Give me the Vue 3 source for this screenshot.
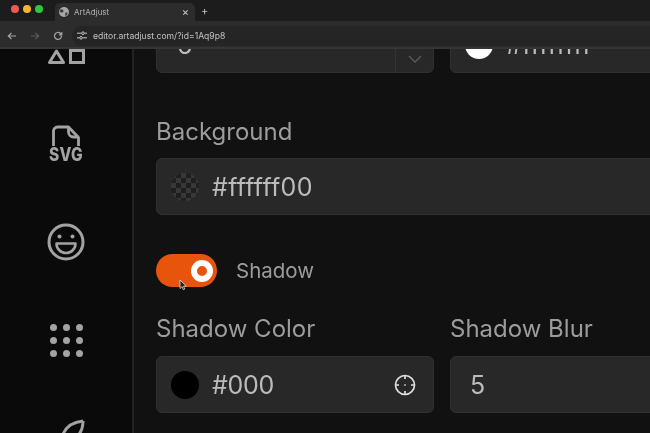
<script setup>
const dots = Array.from({ length: 9 })
</script>

<template>
  <div class="app">
    <div class="tabbar">
      <div class="lights">
        <span class="light red"></span>
        <span class="light yellow"></span>
        <span class="light green"></span>
      </div>
      <div class="tab">
        <svg class="globe" width="10" height="10" viewBox="0 0 12 12">
          <circle cx="6" cy="6" r="6" fill="#a8a8a8" />
          <path d="M2 2.500l3 1 .5 2-2 1.500L1 6zM7.500 7l3-.5-1 3-2 1.500z" fill="#3a3a3a" />
        </svg>
        <span class="tab-title">ArtAdjust</span>
        <span class="tab-close">×</span>
      </div>
      <span class="new-tab">+</span>
    </div>

    <div class="toolbar">
      <svg class="nav" width="10" height="10" viewBox="0 0 10 10" fill="none" stroke="#a5a5a5" stroke-width="1.200">
        <path d="M9 5H1.500M4.500 1.800L1.300 5l3.200 3.200" />
      </svg>
      <svg class="nav" width="10" height="10" viewBox="0 0 10 10" fill="none" stroke="#5c5c5c" stroke-width="1.200">
        <path d="M1 5h7.500M5.500 1.800L8.700 5 5.500 8.200" />
      </svg>
      <svg class="nav" width="10" height="10" viewBox="0 0 10 10" fill="none" stroke="#a5a5a5" stroke-width="1.200">
        <path d="M8.500 5a3.500 3.500 0 1 1-1-2.500L8.600 3.600M8.800 1v2.800H6" />
      </svg>
      <div class="url-pill">
        <svg width="10" height="9" viewBox="0 0 10 9" fill="none" stroke="#c4c4c4" stroke-width="1">
          <path d="M0 2.200h4.500M7.500 2.200H10M0 6.800h2.500M5.500 6.800H10" />
          <circle cx="6" cy="2.200" r="1.300" />
          <circle cx="4" cy="6.800" r="1.300" />
        </svg>
        <span class="url">editor.artadjust.com/?id=1Aq9p8</span>
      </div>
    </div>

    <div class="body">
      <aside class="sidebar">
        <svg class="ico-shapes" width="38" height="18" viewBox="0 0 38 18" fill="none" stroke="#a3a3a3" stroke-width="3">
          <path d="M9.500 4L2.500 15.500h14z" stroke-linejoin="round" />
          <rect x="23.500" y="3.500" width="13" height="12" />
        </svg>
        <div class="ico-svg">
          <svg width="30" height="22" viewBox="0 0 30 22" fill="none" stroke="#a3a3a3" stroke-width="2.800" stroke-linejoin="round">
            <path d="M2.500 21V6a4 4 0 0 1 4-4h11l10 10.500V21" />
            <path d="M17.500 2v5a5 5 0 0 0 5 5h5" />
          </svg>
          <span class="svg-label">SVG</span>
        </div>
        <svg class="ico-smile" width="38" height="38" viewBox="0 0 38 38" fill="none">
          <circle cx="19" cy="19" r="17" stroke="#a3a3a3" stroke-width="3" />
          <circle cx="12.500" cy="13.500" r="2" fill="#a3a3a3" />
          <circle cx="25.500" cy="13.500" r="2" fill="#a3a3a3" />
          <path d="M9.500 20.500h19a9.500 9.500 0 0 1-19 0z" stroke="#a3a3a3" stroke-width="2.600" stroke-linejoin="round" />
        </svg>
        <div class="ico-dots">
          <span v-for="(d, i) in dots" :key="i" class="dot"></span>
        </div>
        <svg class="ico-leaf" width="26" height="30" viewBox="0 0 26 30" fill="none" stroke="#a3a3a3" stroke-width="3" stroke-linejoin="round">
          <path d="M24 2C14 3 6 8 3 18c-1 4-1 8-1 12" />
          <path d="M24 2c0 8-3 14-9 18-3 2-6 3-9 3" />
        </svg>
      </aside>

      <main class="panel">
        <div class="form">
          <div class="row">
            <div class="input">
              <span class="value num">6</span>
              <div class="select-end">
                <svg width="14" height="8" viewBox="0 0 14 8" fill="none" stroke="#5a5a5a" stroke-width="1.400">
                  <path d="M1 1l6 6 6-6" />
                </svg>
              </div>
            </div>
            <div class="input">
              <span class="swatch white"></span>
              <span class="value hex">#ffffffff</span>
            </div>
          </div>

          <div class="field background">
            <label class="label">Background</label>
            <div class="input wide">
              <span class="swatch checker"></span>
              <span class="value hex">#ffffff00</span>
            </div>
          </div>

          <div class="toggle-row">
            <div class="toggle">
              <span class="knob"></span>
              <svg class="cursor" width="9" height="12" viewBox="0 0 9 12">
                <path d="M1 1v8.500l2-1.800 1.300 3 1.500-.7-1.300-2.800h2.800z" fill="#222" stroke="#ddd" stroke-width=".8" />
              </svg>
            </div>
            <span class="toggle-label">Shadow</span>
          </div>

          <div class="row shadow">
            <div class="field">
              <label class="label">Shadow Color</label>
              <div class="input">
                <span class="swatch black"></span>
                <span class="value">#000</span>
                <svg class="picker" width="22" height="22" viewBox="0 0 22 22" fill="none" stroke="#dedede" stroke-width="1.700">
                  <circle cx="11" cy="11" r="9.500" />
                  <path d="M11 1.500v3.500M11 17v3.500M1.500 11H5M17 11h3.500" />
                  <circle cx="11" cy="11" r=".6" stroke-width=".8" />
                </svg>
              </div>
            </div>
            <div class="field">
              <label class="label">Shadow Blur</label>
              <div class="input">
                <span class="value plain">5</span>
              </div>
            </div>
          </div>
        </div>
      </main>
    </div>
  </div>
</template>

<style>
html, body {
  margin: 0;
  background: #111;
}
</style>

<style scoped>
.app {
  width: 650px;
  height: 433px;
  overflow: hidden;
  display: flex;
  flex-direction: column;
  background: #111;
  font-family: Inter, "Liberation Sans", sans-serif;
  filter: blur(0.5px);
}

/* browser chrome */
.tabbar {
  height: 21px;
  flex: none;
  display: flex;
  align-items: flex-end;
  background: #1c1c1c;
}
.lights {
  width: 55px;
  height: 100%;
  flex: none;
  display: flex;
  align-items: center;
  gap: 4px;
  padding: 0 0 3px 11px;
  box-sizing: border-box;
}
.light {
  width: 8px;
  height: 8px;
  border-radius: 50%;
}
.red { background: #ed5a50; }
.yellow { background: #f5b52f; }
.green { background: #2fc83f; }
.tab {
  width: 140px;
  height: 18px;
  box-sizing: border-box;
  display: flex;
  align-items: center;
  padding: 0 6px 0 4px;
  background: #2c2c2c;
  border-radius: 5px 5px 0 0;
}
.globe {
  margin-right: 5px;
}
.tab-title {
  font-size: 8px;
  color: #b4b4b4;
}
.tab-close {
  margin-left: auto;
  font-size: 11px;
  color: #d0d0d0;
}
.new-tab {
  margin: 0 0 3px 6px;
  font-size: 11px;
  color: #c4c4c4;
}
.toolbar {
  height: 28px;
  flex: none;
  box-sizing: border-box;
  display: flex;
  align-items: center;
  padding: 3px 0 0 7px;
  background: #2c2c2c;
  border-bottom: 2px solid #363636;
}
.nav {
  flex: none;
  margin-right: 13px;
}
.url-pill {
  flex: 1;
  height: 20px;
  margin-left: -4px;
  display: flex;
  align-items: center;
  gap: 6px;
  padding-left: 5px;
  background: #252525;
  border-radius: 10px 0 0 10px;
}
.url {
  font-size: 8.600px;
  color: #c2c2c2;
}

/* editor */
.body {
  flex: 1;
  min-height: 0;
  display: flex;
}
.sidebar {
  width: 132px;
  flex: none;
  overflow: hidden;
  display: flex;
  flex-direction: column;
  align-items: center;
  background: #0a0a0a;
  border-right: 2px solid #222;
}
.ico-shapes {
  flex: none;
  margin-top: -2px;
}
.ico-svg {
  flex: none;
  margin-top: 60px;
  display: flex;
  flex-direction: column;
  align-items: center;
}
.svg-label {
  font-size: 15.500px;
  line-height: 15px;
  font-weight: 800;
  color: #a3a3a3;
  letter-spacing: 0.3px;
  transform: scaleY(1.2);
}
.ico-smile {
  flex: none;
  margin-top: 61px;
}
.ico-dots {
  flex: none;
  margin-top: 62.500px;
  display: grid;
  grid-template-columns: repeat(3, 7px);
  gap: 6px;
}
.dot {
  width: 7px;
  height: 7px;
  border-radius: 50%;
  background: #a3a3a3;
}
.ico-leaf {
  flex: none;
  margin-top: 62.500px;
  margin-left: 12px;
}
.panel {
  flex: 1;
  min-width: 0;
  overflow: hidden;
}
.form {
  margin-top: -33px;
  padding-left: 22px;
  width: 600px;
}
.row {
  display: grid;
  grid-template-columns: 278px 278px;
  gap: 16px;
}
.input {
  height: 57px;
  box-sizing: border-box;
  display: flex;
  align-items: center;
  gap: 13px;
  padding-left: 14px;
  background: #282828;
  border: 1px solid #303030;
  border-radius: 6px;
}
.value {
  font-size: 25px;
  color: #bcbcbc;
  letter-spacing: -0.3px;
}
.value.hex {
  letter-spacing: 0.3px;
}
.value.plain {
  padding-left: 5px;
}
.value.num {
  padding-left: 6px;
}
.select-end {
  margin-left: auto;
  width: 38px;
  height: 100%;
  box-sizing: border-box;
  padding-top: 28px;
  display: flex;
  align-items: center;
  justify-content: center;
  border-left: 1px solid #333;
}
.swatch {
  width: 28px;
  height: 28px;
  flex: none;
  border-radius: 50%;
}
.white { background: #fff; }
.black { background: #000; }
.checker {
  background: repeating-conic-gradient(#1f1f1f 0 25%, #383838 0 50%) 0 0 / 10px 10px;
}
.picker {
  margin-left: auto;
  margin-right: 17px;
}
.field {
  display: flex;
  flex-direction: column;
  gap: 11px;
}
.background {
  margin-top: 44px;
}
.input.wide {
  width: 560px;
}
.label {
  font-size: 24px;
  line-height: 30px;
  color: #9c9c9c;
}
.toggle-row {
  margin-top: 39px;
  display: flex;
  align-items: center;
  gap: 19px;
}
.toggle {
  position: relative;
  width: 61px;
  height: 33px;
  display: flex;
  align-items: center;
  justify-content: flex-end;
  padding-right: 4px;
  box-sizing: border-box;
  background: #e8540c;
  border-radius: 17px;
}
.knob {
  width: 22px;
  height: 22px;
  box-sizing: border-box;
  border: 6.500px solid #fff;
  border-radius: 50%;
  background: #e8540c;
}
.cursor {
  position: absolute;
  left: 23px;
  top: 25px;
}
.toggle-label {
  font-size: 20.500px;
  color: #9c9c9c;
}
.shadow {
  margin-top: 27px;
}
.shadow .field {
  gap: 12px;
}
</style>
